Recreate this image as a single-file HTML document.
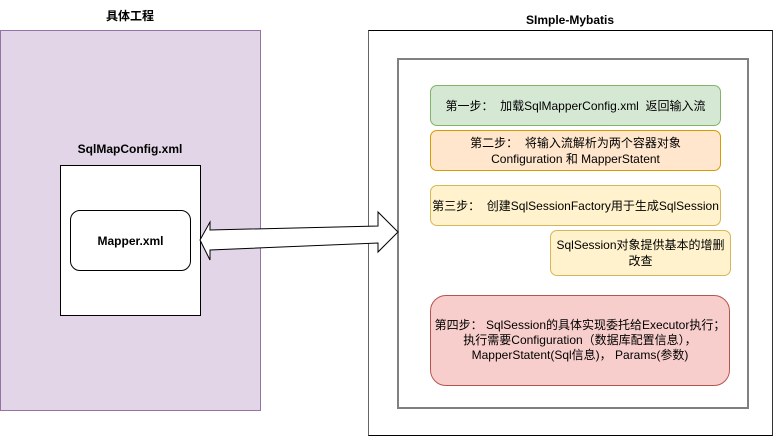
<!DOCTYPE html>
<html><head><meta charset="utf-8"><style>
body{margin:0;width:774px;height:436px;background:#fff;position:relative;overflow:hidden;font-family:"Liberation Sans","Noto Sans CJK SC",sans-serif;font-size:12px;color:#000}
.a{position:absolute;box-sizing:border-box}
.t{position:absolute;font-weight:bold;text-align:center}
.c{display:flex;align-items:center;justify-content:center;text-align:center;line-height:16px}
</style></head><body>
<div class="t" style="left:0;width:260px;top:7px">具体工程</div>
<div class="a" style="left:0;top:30px;width:261px;height:381px;background:#e1d5e7;border:1px solid #9673a6"></div>
<div class="t" style="left:0;width:260px;top:142px">SqlMapConfig.xml</div>
<div class="a" style="left:60px;top:165px;width:141px;height:151px;background:#fff;border:1px solid #000"></div>
<div class="a c" style="left:70px;top:210px;width:121px;height:61px;background:#fff;border:1px solid #000;border-radius:10px;font-weight:bold">Mapper.xml</div>
<div class="t" style="left:368px;width:404px;top:13px">SImple-Mybatis</div>
<div class="a" style="left:368px;top:30px;width:405px;height:406px;border:1px solid #000;border-left-color:#666;border-right-color:#333"></div>
<div class="a" style="left:397px;top:58px;width:352px;height:351px;border:2px solid #808080"></div>
<svg class="a" style="left:0;top:0" width="774" height="436"><path d="M200,240 L210,222 L210,230 L378,226 L378,212 L398,232 L378,252 L378,243 L210,250 L210,260 Z" fill="#fff" stroke="#000" stroke-width="1"/></svg>
<div class="a c" style="left:430px;top:85px;width:291px;height:41px;background:#d5e8d4;border:1px solid #82b366;border-radius:7px">第一步：&nbsp; 加载SqlMapperConfig.xml&nbsp; 返回输入流</div>
<div class="a c" style="left:430px;top:130px;width:291px;height:41px;background:#ffe6cc;border:1px solid #d79b00;border-radius:7px">第二步：&nbsp; 将输入流解析为两个容器对象<br>Configuration 和 MapperStatent</div>
<div class="a c" style="left:430px;top:185px;width:291px;height:41px;background:#fff2cc;border:1px solid #d6b656;border-radius:7px;white-space:nowrap">第三步：&nbsp; 创建SqlSessionFactory用于生成SqlSession</div>
<div class="a c" style="left:550px;top:230px;width:181px;height:46px;background:#fff2cc;border:1px solid #d6b656;border-radius:7px">SqlSession对象提供基本的增删<br>改查</div>
<div class="a c" style="left:430px;top:295px;width:300px;height:91px;background:#f8cecc;border:1px solid #b85450;border-radius:16px;line-height:15px;white-space:nowrap">第四步：&nbsp;SqlSession的具体实现委托给Executor执行；<br>执行需要Configuration（数据库配置信息），<br>MapperStatent(Sql信息)，&nbsp;Params(参数)</div>
</body></html>
